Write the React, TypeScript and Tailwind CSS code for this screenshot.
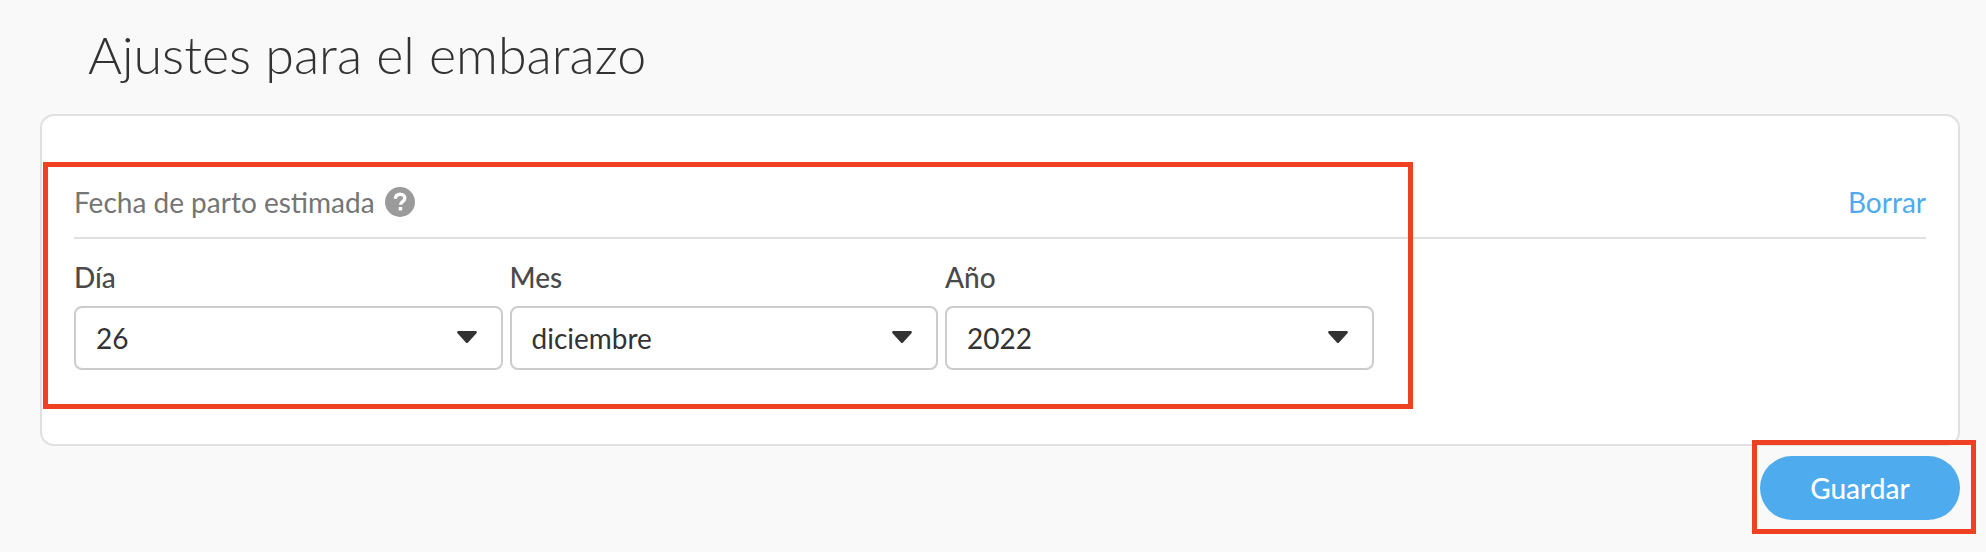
const font = "font-['Lato','Liberation_Sans',sans-serif]"

const DateSelect = ({ label, value }: { label: string; value: string }) => {
  return (
    <div className="w-[428.5px]">
      <label className="block h-[36px] text-[28px] leading-[36px] font-medium text-[#4a4a4a]">{label}</label>
      <div className="relative mt-[11px]">
        <select
          defaultValue={value}
          className="block h-[64px] w-full appearance-none rounded-[8px] border-2 border-[#cccccc] bg-white pl-[20px] text-[28px] text-[#333333] outline-none"
        >
          <option value={value}>{value}</option>
        </select>
        <svg className="absolute right-[26px] top-[25px] h-[12px] w-[20px]" viewBox="0 0 20 12">
          <path d="M1.5 0h17c1.2 0 1.8 1.3 1 2.2L11 11.4c-.6.7-1.5.7-2.1 0L.5 2.2C-.3 1.3.3 0 1.5 0z" fill="#333333" />
        </svg>
      </div>
    </div>
  )
}

const HelpIcon = () => (
  <svg className="h-[30px] w-[30px]" viewBox="0 0 30 30">
    <circle cx="15" cy="15" r="15" fill="#9b9b9b" />
    <path d="M10.4 11.8c0-3 2-4.6 4.8-4.6 2.7 0 4.6 1.6 4.6 4 0 3.4-4.3 3.4-4.3 6.6" fill="none" stroke="#ffffff" strokeWidth="3.4" />
    <rect x="13.7" y="20" width="3.5" height="3.5" fill="#ffffff" />
  </svg>
)

export default function App() {
  return (
    <div className={`${font} relative h-[552px] w-[1986px] overflow-hidden bg-[#f9f9f9]`}>
      <h1 className="pl-[88px] pt-[24px] text-[52px] leading-[60px] font-light text-[#333333]">Ajustes para el embarazo</h1>
      <div className="relative ml-[40px] mr-[26px] mt-[30px] h-[332px] rounded-[14px] border-2 border-[#e0e0e0] bg-white px-[32px] pt-[66px]">
        <div className="flex h-[57px] items-start justify-between border-b-2 border-[#e0e0e0]">
          <div className="flex items-center gap-[10px] text-[28px] leading-[40px] text-[#757575]">
            <span>Fecha de parto estimada</span>
            <HelpIcon />
          </div>
          <a className="text-[28px] leading-[40px] text-[#4eabee]">Borrar</a>
        </div>
        <div className="mt-[20px] flex gap-[7px]">
          <DateSelect label="Día" value="26" />
          <DateSelect label="Mes" value="diciembre" />
          <DateSelect label="Año" value="2022" />
        </div>
        <div className="absolute left-[1px] top-[46px] h-[247px] w-[1370px] border-[5px] border-[#ee4023]" />
      </div>
      <div className="mr-[26px] mt-[10px] flex justify-end">
        <button className="h-[64px] w-[200px] rounded-full bg-[#4eabee] text-[28px] font-medium text-white">Guardar</button>
      </div>
      <div className="absolute left-[1752px] top-[440px] h-[94px] w-[224px] border-[5px] border-[#ee4023]" />
    </div>
  )
}
